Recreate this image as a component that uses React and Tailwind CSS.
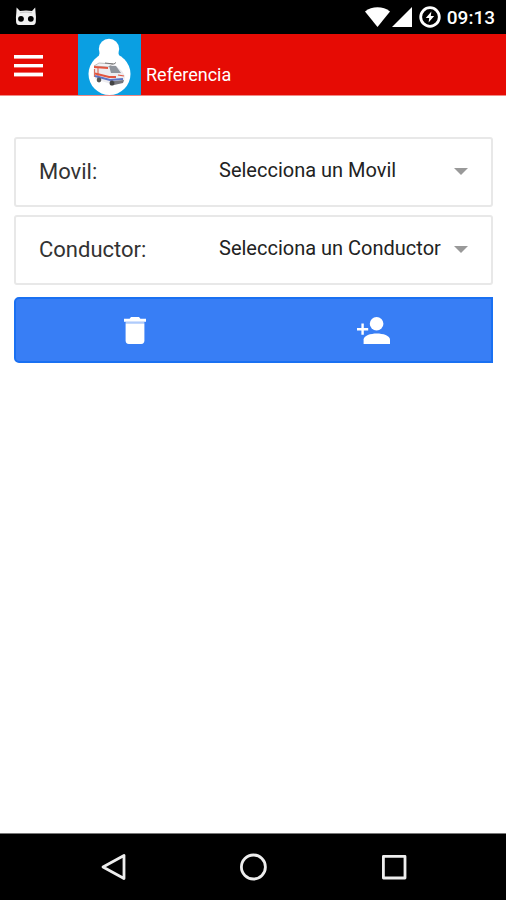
import { useState } from 'react'

const FIELDS = [
  { id: 'movil', label: 'Movil:', placeholder: 'Selecciona un Movil' },
  { id: 'conductor', label: 'Conductor:', placeholder: 'Selecciona un Conductor' },
]

function StatusBar() {
  return (
    <div className="h-[34px] shrink-0 bg-black text-white flex items-center justify-between pl-[15px] pr-[11px]">
      <svg viewBox="0 0 22 20" className="w-[22px] h-5" fill="#f1f1f1">
        <path d="M1.6 0.6 L5 4 Q11 3 17 4 L20.2 0.6 L20.6 6 Q21.2 9 20.8 15 Q20.4 18 18 18 H4 Q1.4 18 1.1 15 Q0.7 9 1.3 6 Z" />
        <path d="M5 5.6 Q11 4.6 17 5.6" stroke="#ccc" strokeWidth="1.4" fill="none" />
        <circle cx="6" cy="11.8" r="2.9" fill="#000" />
        <circle cx="15.8" cy="11.8" r="2.9" fill="#000" />
      </svg>
      <div className="flex items-center">
        <svg viewBox="0 0 25 20" className="w-[25px] h-5" fill="#fff">
          <path d="M0 4.4 C7 -1 18 -1 25 4.4 L12.5 20 Z" />
        </svg>
        <svg viewBox="0 0 20 20" className="w-5 h-5 ml-[2px]" fill="#fff">
          <path d="M20 0 V20 H0 Z" />
        </svg>
        <svg viewBox="0 0 22 22" className="w-[22px] h-[22px] ml-[7px]" fill="none">
          <circle cx="11" cy="11" r="9.3" stroke="#fff" strokeWidth="2.8" />
          <path d="M12.4 5.6 L6.8 12 H10.2 L9.6 16.4 L15.2 10 H11.8 Z" fill="#fff" />
        </svg>
        <span className="ml-[6px] pt-[2px] text-[19px] leading-6 font-medium">09:13</span>
      </div>
    </div>
  )
}

function Logo() {
  return (
    <svg viewBox="0 0 63 61" className="w-[63px] h-full">
      <rect width="63" height="61" fill="#0a9fe2" />
      <circle cx="31" cy="15" r="10.2" fill="#fff" />
      <path d="M22 18 H40 L42 24 H20 Z" fill="#fff" />
      <circle cx="31.5" cy="40" r="21" fill="#fff" />
      <path d="M16 32 L21 29 L36 30 L44 37 L47 42 L46 48 L36 51 L17 45 Z" fill="#ececf0" />
      <path d="M16 32 L21 29 L35 30 L30 33 Z" fill="#f3f3f5" stroke="#999" strokeWidth="0.6" />
      <path d="M16 32 L30 33 L30 35 L16 34 Z" fill="#e2553f" />
      <path d="M16.5 35 V43 M20 34 V44" stroke="#d9705f" strokeWidth="1.2" />
      <path d="M17 42 L32 46 L45 45" stroke="#5d74c4" strokeWidth="2" fill="none" />
      <path d="M17 39.5 L31 43 L38 43" stroke="#e2553f" strokeWidth="2" fill="none" />
      <path d="M31 32 L38 32 L43 39 L33 39 Z" fill="#8f949c" />
      <path d="M27 29 L36 30 L38 28.5" stroke="#777" strokeWidth="1" fill="none" />
      <path d="M36 47 L46 46 L45 49 L36 51 Z" fill="#77777d" />
      <path d="M40 41 L46 42" stroke="#e2553f" strokeWidth="1.2" />
      <ellipse cx="21" cy="46" rx="2.3" ry="2.4" fill="#555" />
      <ellipse cx="34" cy="49" rx="2.4" ry="2.6" fill="#444" />
    </svg>
  )
}

function Header() {
  return (
    <header className="h-[62px] shrink-0 bg-[#e60b04] border-b border-[#f08a86] flex">
      <button type="button" aria-label="Menu" className="w-[78px] pt-[2px] pl-[14px] flex items-center">
        <svg viewBox="0 0 29 22" className="w-[29px] h-[22px]" fill="#fff">
          <rect y="0" width="29" height="3.6" />
          <rect y="9" width="29" height="3.4" />
          <rect y="17.6" width="29" height="3.8" />
        </svg>
      </button>
      <Logo />
      <h1 className="self-end ml-[5px] pb-2 text-[18px] leading-6 text-white">Referencia</h1>
    </header>
  )
}

function SelectField({ id, label, placeholder }) {
  const [value, setValue] = useState('')

  return (
    <div className="h-[70px] flex items-center border-2 border-[#e8e8e8] rounded-[3px] px-[23px]">
      <label htmlFor={id} className="w-[180px] shrink-0 text-[22px] leading-7 text-[#333]">{label}</label>
      <div className="relative flex-1 pb-1">
        <select
          id={id}
          value={value}
          onChange={(e) => setValue(e.target.value)}
          className="appearance-none w-full bg-transparent text-[20px] leading-7 text-[#222] outline-none">
          <option value="">{placeholder}</option>
        </select>
        <svg viewBox="0 0 14 7" className="absolute right-0 top-3 w-[14px] h-[7px] pointer-events-none" fill="#999">
          <path d="M0 0 H14 L7 7 Z" />
        </svg>
      </div>
    </div>
  )
}

function ActionBar() {
  return (
    <div className="h-[66px] mt-1 grid grid-cols-2 bg-[#387ef5] border-2 border-[#1a70f2] rounded-l-[5px] text-white">
      <button type="button" aria-label="Eliminar" className="flex items-center justify-center">
        <svg viewBox="0 0 22 27" className="w-[22px] h-[27px]" fill="#fff">
          <path d="M0 1.8 H5.6 L7 0 H15 L16.4 1.8 H22 V4.8 H0 Z" />
          <path d="M1.6 4.8 H20.4 V7 H1.6 Z" opacity="0.6" />
          <path d="M1.6 6.8 H20.4 V23.6 Q20.4 27 17.2 27 H4.8 Q1.6 27 1.6 23.6 Z" />
        </svg>
      </button>
      <button type="button" aria-label="Agregar persona" className="pl-[2px] flex items-center justify-center">
        <svg viewBox="0 0 33 27" className="w-[33px] h-[27px]" fill="#fff">
          <circle cx="19.6" cy="6.8" r="6.8" />
          <path d="M6.6 27 V22.6 C6.6 18.4 13.6 16.4 19.8 16.4 S33 18.4 33 22.6 V27 Z" />
          <path d="M4.4 6.6 H6.8 V11 H11.2 V13.4 H6.8 V17.8 H4.4 V13.4 H0 V11 H4.4 Z" />
        </svg>
      </button>
    </div>
  )
}

function NavBar() {
  return (
    <nav className="h-[67px] shrink-0 bg-black border-t border-[#777] flex items-center justify-center gap-28">
      <button type="button" aria-label="Atras" className="w-7 h-7">
        <svg viewBox="0 0 28 28" className="w-7 h-7" fill="none" stroke="#eee" strokeWidth="2.8" strokeLinejoin="round">
          <path d="M25 2.5 V25.5 L4 14 Z" />
        </svg>
      </button>
      <button type="button" aria-label="Inicio" className="w-7 h-7">
        <svg viewBox="0 0 28 28" className="w-7 h-7" fill="none" stroke="#eee" strokeWidth="2.8">
          <circle cx="14.4" cy="14" r="12" />
        </svg>
      </button>
      <button type="button" aria-label="Recientes" className="w-7 h-7">
        <svg viewBox="0 0 28 28" className="w-7 h-7" fill="none" stroke="#eee" strokeWidth="2.8" strokeLinejoin="round">
          <rect x="4.4" y="3.4" width="21.6" height="21.6" />
        </svg>
      </button>
    </nav>
  )
}

export default function App() {
  return (
    <div className="min-h-screen flex flex-col bg-white font-[Roboto,sans-serif]">
      <StatusBar />
      <Header />
      <main className="flex-1 flex flex-col gap-2 pt-[41px] pl-[14px] pr-[13px]">
        {FIELDS.map((f) => (
          <SelectField key={f.id} {...f} />
        ))}
        <ActionBar />
      </main>
      <NavBar />
    </div>
  )
}
